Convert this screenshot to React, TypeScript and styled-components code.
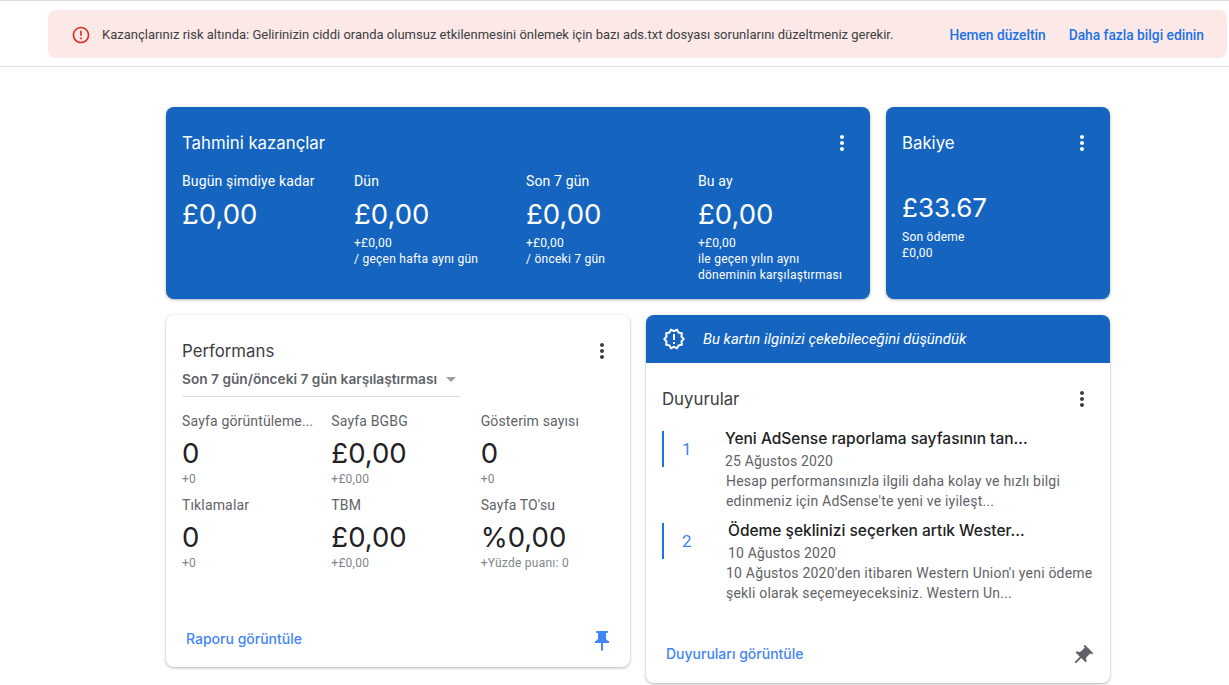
import styled, { createGlobalStyle } from 'styled-components'
import {
  MdArrowDropDown,
  MdErrorOutline,
  MdMoreVert,
  MdOutlineNewReleases,
  MdPushPin,
} from 'react-icons/md'

const headingFont = `'Inter', 'Noto Sans', sans-serif`
const bodyFont = `'Roboto', 'Liberation Sans', sans-serif`

const earnings = [
  { label: 'Bugün şimdiye kadar', value: '£0,00', notes: [] },
  { label: 'Dün', value: '£0,00', notes: ['+£0,00', '/ geçen hafta aynı gün'] },
  { label: 'Son 7 gün', value: '£0,00', notes: ['+£0,00', '/ önceki 7 gün'] },
  {
    label: 'Bu ay',
    value: '£0,00',
    notes: ['+£0,00', 'ile geçen yılın aynı', 'döneminin karşılaştırması'],
  },
]

const metrics = [
  { label: 'Sayfa görüntüleme...', value: '0', delta: '+0' },
  { label: 'Sayfa BGBG', value: '£0,00', delta: '+£0,00' },
  { label: 'Gösterim sayısı', value: '0', delta: '+0' },
  { label: 'Tıklamalar', value: '0', delta: '+0' },
  { label: 'TBM', value: '£0,00', delta: '+£0,00' },
  { label: "Sayfa TO'su", value: '%0,00', delta: '+Yüzde puanı: 0' },
]

const news = [
  {
    n: 1,
    indent: 0,
    title: 'Yeni AdSense raporlama sayfasının tan...',
    date: '25 Ağustos 2020',
    text: "Hesap performansınızla ilgili daha kolay ve hızlı bilgi edinmeniz için AdSense'te yeni ve iyileşt...",
  },
  {
    n: 2,
    indent: 3,
    title: 'Ödeme şeklinizi seçerken artık Wester...',
    date: '10 Ağustos 2020',
    text: "10 Ağustos 2020'den itibaren Western Union'ı yeni ödeme şekli olarak seçemeyeceksiniz. Western Un...",
  },
]

export default function App() {
  return (
    <>
      <GlobalStyle />
      <Banner>
        <Alert>
          <MdErrorOutline size={20} color="#d93025" />
          <AlertText>
            Kazançlarınız risk altında: Gelirinizin ciddi oranda olumsuz etkilenmesini önlemek için
            bazı ads.txt dosyası sorunlarını düzeltmeniz gerekir.
          </AlertText>
          <AlertLink>Hemen düzeltin</AlertLink>
          <AlertLink>Daha fazla bilgi edinin</AlertLink>
        </Alert>
      </Banner>

      <Page>
        <TopRow>
          <BlueCard>
            <CardHead>
              <Title>Tahmini kazançlar</Title>
              <MdMoreVert size={24} color="#fff" />
            </CardHead>
            <EarningsGrid>
              {earnings.map((e) => (
                <div key={e.label}>
                  <EarningLabel>{e.label}</EarningLabel>
                  <EarningValue>{e.value}</EarningValue>
                  {e.notes.map((note) => (
                    <Note key={note}>{note}</Note>
                  ))}
                </div>
              ))}
            </EarningsGrid>
          </BlueCard>

          <BlueCard>
            <CardHead>
              <Title>Bakiye</Title>
              <MdMoreVert size={24} color="#fff" />
            </CardHead>
            <BalanceValue>£33.67</BalanceValue>
            <Note>Son ödeme</Note>
            <Note>£0,00</Note>
          </BlueCard>
        </TopRow>

        <BottomRow>
          <WhiteCard>
            <CardHead>
              <Title $dark>Performans</Title>
              <MdMoreVert size={24} color="#3c4043" />
            </CardHead>
            <RangeSelect>
              <span>Son 7 gün/önceki 7 gün karşılaştırması</span>
              <MdArrowDropDown size={24} color="#9aa0a6" />
            </RangeSelect>
            <MetricGrid>
              {metrics.map((m) => (
                <Metric key={m.label}>
                  <MetricLabel>{m.label}</MetricLabel>
                  <MetricValue>{m.value}</MetricValue>
                  <MetricDelta>{m.delta}</MetricDelta>
                </Metric>
              ))}
            </MetricGrid>
            <PerfFooter>
              <FooterLink>Raporu görüntüle</FooterLink>
              <MdPushPin size={24} color="#4285f4" />
            </PerfFooter>
          </WhiteCard>

          <NewsCard>
            <Suggestion>
              <MdOutlineNewReleases size={24} color="#fff" />
              <em>Bu kartın ilginizi çekebileceğini düşündük</em>
            </Suggestion>
            <NewsBody>
              <CardHead>
                <Title $dark>Duyurular</Title>
                <MdMoreVert size={24} color="#3c4043" />
              </CardHead>
              <NewsList>
                {news.map((item) => (
                  <NewsItem key={item.n}>
                    <NewsNumber>{item.n}</NewsNumber>
                    <NewsContent>
                      <NewsTitle $indent={item.indent}>{item.title}</NewsTitle>
                      <NewsDate $indent={item.indent}>{item.date}</NewsDate>
                      <NewsText>{item.text}</NewsText>
                    </NewsContent>
                  </NewsItem>
                ))}
              </NewsList>
              <NewsFooter>
                <FooterLink>Duyuruları görüntüle</FooterLink>
                <TiltedPin>
                  <MdPushPin size={24} color="#5f6368" />
                </TiltedPin>
              </NewsFooter>
            </NewsBody>
          </NewsCard>
        </BottomRow>
      </Page>
    </>
  )
}

const GlobalStyle = createGlobalStyle`
  html, body {
    margin: 0;
    height: 685px;
    overflow: hidden;
    background: #fff;
    font-family: ${bodyFont};
  }
  svg {
    display: block;
    flex-shrink: 0;
  }
`

const Banner = styled.header`
  height: 67px;
  padding: 9px 2px 0 48px;
  box-sizing: border-box;
  border-top: 1px solid #e0e0e0;
  border-bottom: 1px solid #e0e0e0;
`

const Alert = styled.div`
  display: flex;
  align-items: center;
  height: 48px;
  padding: 1px 23px 0 23px;
  box-sizing: border-box;
  border-radius: 8px;
  background: #fce8e6;
`

const AlertText = styled.span`
  flex: 1;
  margin-left: 11px;
  font-size: 13px;
  color: #3c4043;
`

const AlertLink = styled.a`
  margin-left: 23px;
  font-size: 13.75px;
  font-weight: 500;
  color: #1a73e8;
`

const Page = styled.main`
  display: flex;
  flex-direction: column;
  gap: 16px;
  width: 944px;
  margin: 40px 0 0 166px;
`

const TopRow = styled.div`
  display: grid;
  grid-template-columns: 704px 224px;
  gap: 16px;
  height: 192px;
`

const BottomRow = styled.div`
  display: flex;
  align-items: flex-start;
  gap: 16px;
`

const BlueCard = styled.section`
  padding: 24px 16px 0;
  border-radius: 8px;
  background: #1565c0;
  color: #fff;
  box-shadow: 0 1px 3px rgba(60, 64, 67, 0.4);
`

const WhiteCard = styled.section`
  display: flex;
  flex-direction: column;
  width: 464px;
  height: 352px;
  box-sizing: border-box;
  padding: 24px 16px 0;
  border-radius: 8px;
  background: #fff;
  box-shadow: 0 1px 3px rgba(60, 64, 67, 0.4);
`

const CardHead = styled.div`
  display: flex;
  align-items: center;
  justify-content: space-between;
  height: 24px;
`

const Title = styled.h2<{ $dark?: boolean }>`
  margin: 0;
  font-family: ${headingFont};
  font-size: 16.8px;
  font-weight: 400;
  color: ${({ $dark }) => ($dark ? '#3c4043' : '#fff')};
`

const EarningsGrid = styled.div`
  display: grid;
  grid-template-columns: repeat(4, 172px);
  margin-top: 16px;
`

const EarningLabel = styled.div`
  font-size: 14px;
  line-height: 20px;
  letter-spacing: 0.15px;
`

const EarningValue = styled.div`
  margin: 7px 0 5px;
  font-family: ${headingFont};
  font-size: 27.5px;
  line-height: 32px;
`

const Note = styled.div`
  font-size: 12px;
  line-height: 16px;
  letter-spacing: 0.25px;
`

const BalanceValue = styled(EarningValue)`
  margin: 37px 0 5px;
  font-size: 26px;
`

const RangeSelect = styled.div`
  display: flex;
  align-items: center;
  gap: 2px;
  width: 279px;
  height: 29px;
  margin-top: 5px;
  padding-bottom: 6px;
  border-bottom: 1px solid #dadce0;
  box-sizing: border-box;
  font-family: ${headingFont};
  font-size: 13.7px;
  font-weight: 600;
  white-space: nowrap;
  color: #5f6368;
`

const MetricGrid = styled.div`
  display: grid;
  grid-template-columns: repeat(3, 149.33px);
  margin-top: 14px;
`

const Metric = styled.div`
  height: 84px;
`

const MetricLabel = styled.div`
  font-size: 14px;
  line-height: 20px;
  letter-spacing: 0.15px;
  color: #5f6368;
  white-space: nowrap;
`

const MetricValue = styled.div`
  margin-top: 6px;
  font-family: ${headingFont};
  font-size: 27.5px;
  line-height: 32px;
  color: #202124;
`

const MetricDelta = styled.div`
  margin-top: 2px;
  font-size: 12px;
  line-height: 16px;
  letter-spacing: 0.25px;
  color: #80868b;
`

const PerfFooter = styled.div`
  display: flex;
  align-items: center;
  justify-content: space-between;
  margin-top: auto;
  padding: 0 0 14px 4px;
`

const FooterLink = styled.a`
  margin-bottom: 5px;
  font-family: ${headingFont};
  font-size: 14px;
  font-weight: 500;
  color: #4285f4;
`

const NewsCard = styled.section`
  overflow: hidden;
  width: 464px;
  height: 368px;
  border-radius: 8px;
  background: #fff;
  box-shadow: 0 1px 3px rgba(60, 64, 67, 0.4);
`

const Suggestion = styled.div`
  display: flex;
  align-items: center;
  gap: 17px;
  height: 48px;
  padding-left: 16px;
  background: #1565c0;
  color: #fff;
  font-size: 14.9px;
`

const NewsBody = styled.div`
  padding: 24px 16px 0;
`

const NewsList = styled.div`
  display: flex;
  flex-direction: column;
  gap: 8px;
  margin-top: 20px;
`

const NewsItem = styled.article`
  display: flex;
  height: 84px;
`

const NewsNumber = styled.div`
  width: 63px;
  height: 36px;
  padding-left: 18px;
  box-sizing: border-box;
  border-left: 2px solid #1a73e8;
  font-size: 17px;
  line-height: 36px;
  color: #4285f4;
`

const NewsContent = styled.div`
  flex: 1;
  margin-top: -2px;
`

const NewsTitle = styled.div<{ $indent: number }>`
  margin-left: ${({ $indent }) => $indent}px;
  font-family: ${headingFont};
  font-size: 15.5px;
  font-weight: 500;
  line-height: 20px;
  white-space: nowrap;
  color: #202124;
`

const NewsDate = styled.div<{ $indent: number }>`
  margin: 2px 0 0 ${({ $indent }) => $indent}px;
  font-size: 14px;
  line-height: 20px;
  letter-spacing: 0.15px;
  color: #5f6368;
`

const NewsText = styled.div`
  margin-left: 1px;
  font-size: 14px;
  line-height: 20px;
  letter-spacing: 0.2px;
  color: #5f6368;
`

const NewsFooter = styled.div`
  display: flex;
  align-items: center;
  justify-content: space-between;
  margin-top: 37px;
  padding-left: 4px;
`

const TiltedPin = styled.span`
  display: block;
  transform: rotate(45deg);
`
